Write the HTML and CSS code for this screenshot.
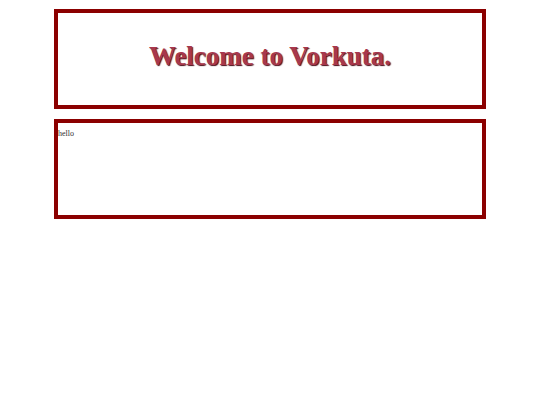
FILE: index.html
```html
<!DOCTYPE html>
<html>
<head>
<meta charset="utf-8">
<link rel="stylesheet" href="styles.css">
</head>
<body>
<div class="box header">
  <h1 class="title">Welcome to Vorkuta.</h1>
</div>
<div class="box content">
  <p class="hello">hello</p>
</div>
</body>
</html>
```
FILE: styles.css
```css
html, body {
  margin: 0;
  padding: 0;
  background: #fff;
}
body {
  padding-top: 9px;
  font-family: "Liberation Serif", serif;
}
.box {
  box-sizing: border-box;
  width: 432px;
  height: 100px;
  margin: 0 auto 10px;
  border: 4px solid #8b0000;
}
.header {
  display: flex;
  align-items: center;
  justify-content: center;
  padding-bottom: 6px;
}
.title {
  margin: 0;
  font-size: 27px;
  font-weight: bold;
  color: #a8384c;
  text-shadow: 1px 1px 1px #4a0a14;
}
.content {
  padding: 6px 0 0 0;
}
.hello {
  margin: 0;
  font-size: 8px;
  color: #333;
}
```
